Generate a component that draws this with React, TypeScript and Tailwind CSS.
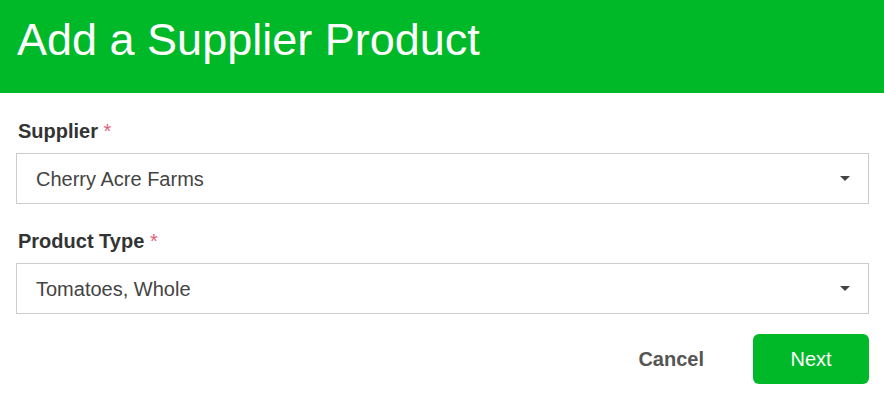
const fields = [
  { label: 'Supplier', value: 'Cherry Acre Farms' },
  { label: 'Product Type', value: 'Tomatoes, Whole' },
]

function SelectBox({ value }: { value: string }) {
  return (
    <div className="flex items-center justify-between h-[51px] border border-[#cccccc] bg-white pl-[19px] pr-[18px]">
      <span className="text-[20px] text-[#444444] leading-none">{value}</span>
      <span className="w-0 h-0 border-l-[5px] border-r-[5px] border-t-[5px] border-l-transparent border-r-transparent border-t-[#444444]" />
    </div>
  )
}

export default function App() {
  return (
    <div className="w-[884px] h-[404px] bg-white font-['Liberation_Sans',Arial,sans-serif]">
      <div className="h-[93px] bg-[#00b929] pl-[17px] pt-[17px]">
        <h1 className="text-[45px] leading-[45px] text-white">Add a Supplier Product</h1>
      </div>

      <div className="pl-[16px] pr-[15px] pt-[26px]">
        {fields.map((f, i) => (
          <div key={f.label} className={i > 0 ? 'mt-[25px]' : ''}>
            <label className="block pl-[2px] text-[20px] leading-[24px] font-bold text-[#333333] mb-[10px]">
              {f.label} <span className="text-[#e0607a] font-normal">*</span>
            </label>
            <SelectBox value={f.value} />
          </div>
        ))}

        <div className="flex items-center justify-end gap-[49px] mt-[20px]">
          <button className="text-[20px] font-bold text-[#555555]">Cancel</button>
          <button className="w-[116px] h-[50px] rounded-[6px] bg-[#00b929] text-white text-[20px]">
            Next
          </button>
        </div>
      </div>
    </div>
  )
}
